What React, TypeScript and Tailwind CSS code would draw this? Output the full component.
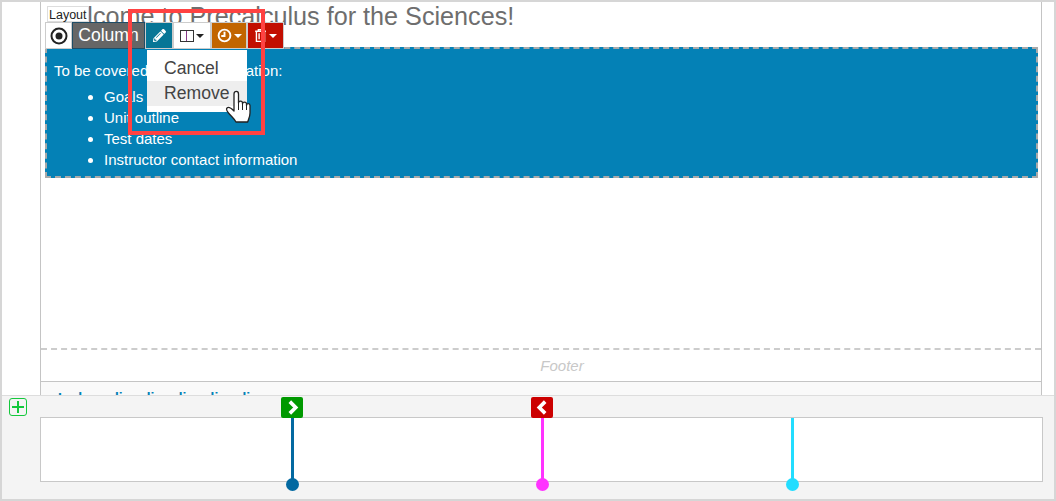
import { FaPencilAlt } from "react-icons/fa";

function TimelineHandle({ left, line, arrow }: { left: string; line: string; arrow?: "next" | "prev" }) {
  return (
    <div className={`absolute top-0 ${left} h-[67px] w-[3px] ${line}`}>
      <div className={`absolute -bottom-[6px] -left-[5px] h-[13px] w-[13px] rounded-full ${line}`} />
      {arrow && (
        <div
          className={`absolute -top-[21px] -left-[10px] flex h-[21px] w-[22px] items-center justify-center rounded-[2px] ${
            arrow === "next" ? "bg-[#009900]" : "bg-[#cc0000]"
          }`}
        >
          <svg width="13" height="15" viewBox="0 0 12 14" fill="none" stroke="white" strokeWidth="3.4">
            <path d={arrow === "next" ? "M3.5 1.5 9 7l-5.500 5.500" : "M8.500 1.500 3 7l5.500 5.500"} />
          </svg>
        </div>
      )}
    </div>
  );
}

function Caret({ color }: { color: string }) {
  return <span className={`ml-[2px] h-0 w-0 border-x-[4.5px] border-t-[4.5px] border-x-transparent ${color}`} />;
}

function HandCursor() {
  return (
    <svg width="26" height="34" viewBox="0 0 26 34" className="absolute left-[223px] top-[88px]">
      <path
        d="M9 4c0-3.500 4.500-3.500 4.500 0v9c0-2.500 4-2.500 4 0v1c0-2.500 4-2.500 4 0v1.500c0-2.500 3.500-2.500 3.500 0V23c0 3.500-1.300 5.500-2.300 9H11c-1.500-3-4-5-7.500-9C1.500 20.500 1 19 2 18s3.500-.5 7 3z"
        fill="white"
        stroke="#222"
        strokeWidth="1.300"
        strokeLinejoin="round"
      />
      <path d="M13.500 13v7M17.500 14v6M21.500 15v5" stroke="#222" strokeWidth="1" />
    </svg>
  );
}

export default function App() {
  return (
    <div className="relative flex h-[501px] w-[1056px] flex-col overflow-hidden border-2 border-[#d6d6d6] bg-white font-['Liberation_Sans',Arial,sans-serif]">
      <div className="ml-[38px] mr-[12px] flex min-h-0 flex-1 flex-col overflow-hidden border-x border-[#c4c4c4]">
        <h1 className="h-[30px] shrink-0 pl-[9px] text-[25.2px] font-normal leading-[28px] text-[#6e6e6e]">
          Welcome to Precalculus for the Sciences!
        </h1>
        <div className="ml-[4px] mr-[3px] mt-[15px] h-[131px] shrink-0 border-[2px] border-dashed border-[#a9a9a9] bg-[#0481b6] pl-[7px] pt-[11px] text-[15px] leading-[21px] text-white">
          <p>To be covered in this presentation:</p>
          <ul className="ml-[50px] mt-[5px] list-disc">
            <li>Goals</li>
            <li>Unit outline</li>
            <li>Test dates</li>
            <li>Instructor contact information</li>
          </ul>
        </div>
        <div className="mt-[170px] h-[33px] shrink-0 border-t-2 border-dashed border-[#cccccc] pl-[42px] text-center text-[15px] italic leading-[31px] text-[#c8c8c8]">
          Footer
        </div>
        <div className="shrink-0 border-t border-[#c4c4c4] bg-[#f9f9f9] pl-[17px] pt-[6px] text-[14px] font-bold leading-[20px] text-[#0481b6]">
          Inclusa disc disc disc disc disc
        </div>
      </div>

      <div className="relative h-[104px] shrink-0 border-t border-[#dddddd] bg-[#f4f4f4] pl-[38px] pr-[11px] pt-[21px]">
        <div className="absolute left-[7px] top-[2px] flex h-[18px] w-[18px] items-center justify-center rounded-[3px] border-[1.5px] border-[#14c83c]">
          <svg width="14" height="14" viewBox="0 0 14 14" stroke="#14c83c" strokeWidth="2">
            <path d="M7 1v12M1 7h12" />
          </svg>
        </div>
        <div className="relative h-[65px] border border-[#c8c8c8] bg-white">
          <TimelineHandle left="left-[250px]" line="bg-[#0369a1]" arrow="next" />
          <TimelineHandle left="left-[500px]" line="bg-[#ff33ff]" arrow="prev" />
          <TimelineHandle left="left-[750px]" line="bg-[#22ddff]" />
        </div>
      </div>

      {/* floating editor chrome */}
      <div className="absolute left-[45px] top-[4px] h-[16px] border border-[#dddddd] bg-white px-[1px] text-[12.500px] leading-[16px] text-[#222]">
        Layout
      </div>
      <div className="absolute left-[43px] top-[20px] flex h-[27px] items-stretch text-white">
        <div className="flex w-[27px] items-center justify-center border border-[#cccccc] bg-white">
          <svg width="18" height="18" viewBox="0 0 18 18">
            <circle cx="9" cy="9" r="7.500" fill="none" stroke="#222" strokeWidth="2" />
            <circle cx="9" cy="9" r="3.500" fill="#222" />
          </svg>
        </div>
        <div className="flex w-[73px] items-center justify-center border border-[#1f4d66] bg-[#666666] text-[17.6px]">Column</div>
        <div className="flex w-[28px] items-center justify-center border border-[#ccc] bg-[#077696]">
          <FaPencilAlt size={13} />
        </div>
        <div className="flex w-[38px] items-center justify-center border border-[#ccc] bg-white">
          <span className="flex h-[12px] w-[14px] border border-[#333]">
            <span className="w-1/2 border-r border-[#8a3a8a]" />
          </span>
          <Caret color="border-t-[#222]" />
        </div>
        <div className="flex w-[36px] items-center justify-center border border-[#ccc] bg-[#c26500]">
          <svg width="15" height="15" viewBox="0 0 14 14" fill="none" stroke="white" strokeWidth="1.800">
            <circle cx="7" cy="7" r="5.500" />
            <path d="M7 3.500V7.500H4" />
          </svg>
          <Caret color="border-t-white" />
        </div>
        <div className="flex w-[37px] items-center justify-center border border-[#ccc] bg-[#c20e00]">
          <svg width="13" height="15" viewBox="0 0 12 14" fill="none" stroke="white" strokeWidth="1.300">
            <path d="M1 3h10M4 3V1.500h4V3M2.200 3v9.500h7.600V3M4.700 5v5.500M7.300 5v5.500" />
          </svg>
          <Caret color="border-t-white" />
        </div>
      </div>

      <div className="absolute left-[145px] top-[48px] h-[62px] w-[100px] bg-white pt-[6px] text-[17.6px] leading-[25px] text-[#444]">
        <div className="pl-[17px]">Cancel</div>
        <div className="bg-[#eeeeee] pl-[17px]">Remove</div>
      </div>
      <HandCursor />

      {/* callout around the toolbar */}
      <div className="absolute left-[126px] top-[7px] h-[126px] w-[137px] border-[4px] border-[#ff4242]" />
    </div>
  );
}
